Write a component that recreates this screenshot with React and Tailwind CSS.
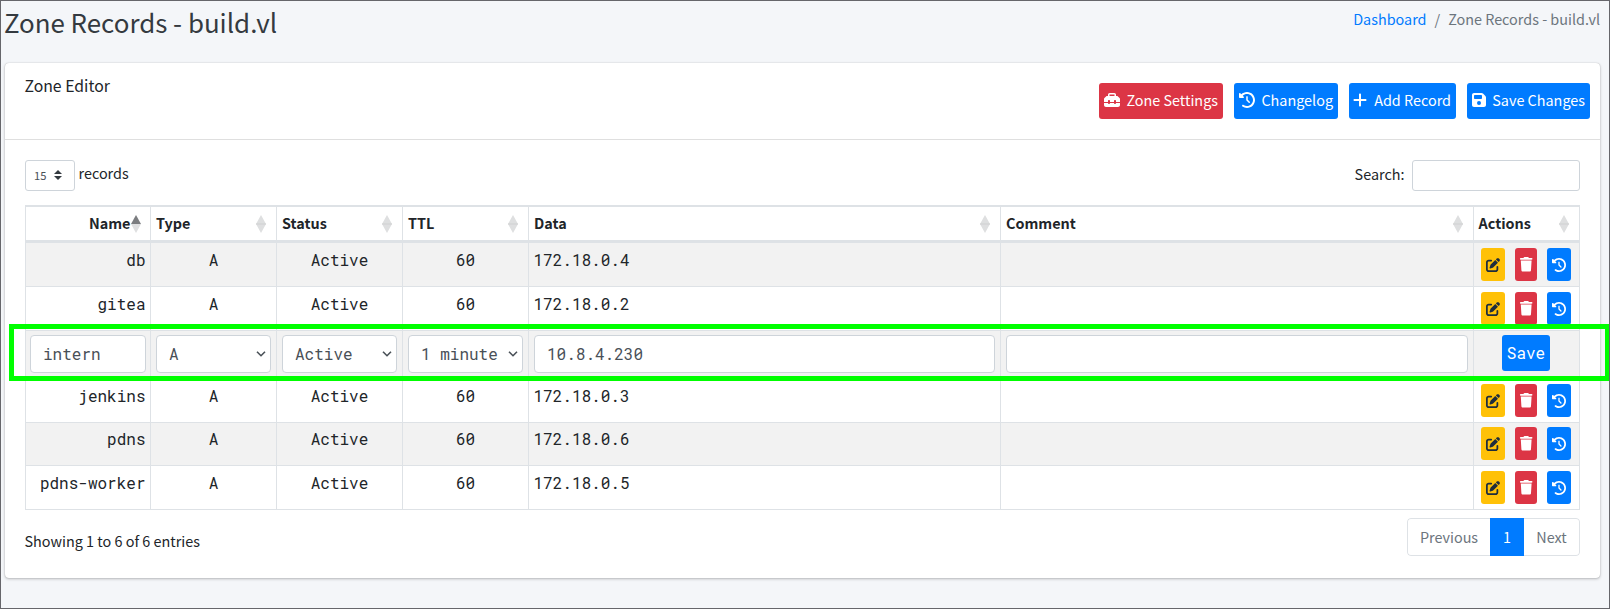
import { FaToolbox, FaClockRotateLeft, FaPlus, FaFloppyDisk, FaPenToSquare, FaTrash } from "react-icons/fa6";

const records = [
  { name: "db", data: "172.18.0.4", height: "h-[44px]", bg: "bg-[#f2f2f2]" },
  { name: "gitea", data: "172.18.0.2", height: "h-[44px]", bg: "bg-white" },
  { name: "intern", data: "10.8.4.230", height: "h-[48px]", bg: "bg-[#f2f2f2]", editing: true },
  { name: "jenkins", data: "172.18.0.3", height: "h-[44px]", bg: "bg-white" },
  { name: "pdns", data: "172.18.0.6", height: "h-[43px]", bg: "bg-[#f2f2f2]", compact: true },
  { name: "pdns-worker", data: "172.18.0.5", height: "h-[44px]", bg: "bg-white" },
];

const columns = ["Name", "Type", "Status", "TTL", "Data", "Comment", "Actions"];

const gridCols = "grid grid-cols-[125px_126px_126px_126px_472px_473px_107px]";
const mono = "font-['Roboto_Mono','DejaVu_Sans_Mono',monospace]";

function SortIcon({ ascending }) {
  return (
    <svg width="10" height="18" viewBox="0 0 10 18" className="shrink-0">
      <path d="M5 0 L10 9 H0 Z" fill={ascending ? "#7b7d80" : "#dedfe0"} />
      <path d="M0 9 H10 L5 18 Z" fill="#dedfe0" />
      {!ascending && <path d="M0 9 H10" stroke="#cfd0d1" strokeWidth="1" />}
    </svg>
  );
}

function ToolButton({ icon: Icon, color, width, iconClass, children }) {
  return (
    <button className={`flex h-9 items-center justify-between rounded-[3px] px-[5px] text-white ${color} ${width}`}>
      <Icon className={`-mt-0.5 h-4 ${iconClass}`} />
      <span className="-mt-0.5">{children}</span>
    </button>
  );
}

function Chevron() {
  return (
    <svg width="10" height="6" viewBox="0 0 10 6" fill="none" stroke="#495057" strokeWidth="1.6">
      <path d="M1 0.7 L5 4.7 L9 0.7" />
    </svg>
  );
}

function Field({ value, select }) {
  return (
    <div className={`flex h-[38px] flex-1 items-center justify-between rounded-[4px] border border-[#ced4da] bg-white pl-3 text-[#495057] ${select ? "pr-1" : ""}`}>
      <span className="whitespace-pre">{value}</span>
      {select && <Chevron />}
    </div>
  );
}

function EditCells({ record }) {
  const cell = "flex border-l border-b border-[#dee2e6] pt-1";
  return (
    <>
      <div className={`${cell} px-1`}><Field value={record.name} /></div>
      <div className={`${cell} px-[5px]`}><Field value="A" select /></div>
      <div className={`${cell} px-[5px]`}><Field value="Active" select /></div>
      <div className={`${cell} px-[5px]`}><Field value="1 minute" select /></div>
      <div className={`${cell} px-[5px]`}><Field value={record.data} /></div>
      <div className={`${cell} px-[5px]`}><Field value="" /></div>
      <div className="flex justify-center border-x border-b border-[#dee2e6] pr-[2px] pt-1">
        <button className="h-9 w-12 rounded-[3px] bg-[#007bff] pl-px text-white">Save</button>
      </div>
    </>
  );
}

function RecordCells({ record }) {
  const cell = `border-l border-b border-[#dee2e6] ${record.compact ? "pt-1" : "pt-[5px]"}`;
  return (
    <>
      <div className={`${cell} pr-[4.5px] text-right`}>{record.name}</div>
      <div className={`${cell} px-[5px] text-center`}>A</div>
      <div className={`${cell} px-[5px] text-center`}>Active</div>
      <div className={`${cell} px-[5px] text-center`}>60</div>
      <div className={`${cell} pl-[4.5px]`}>{record.data}</div>
      <div className={cell} />
      <div className={`flex items-start gap-[10px] border-x border-b border-[#dee2e6] pl-[7px] ${record.compact ? "pt-1" : "pt-[5px]"}`}>
        <button className="flex h-[33px] w-6 items-center justify-center rounded-[3px] bg-[#ffc107] text-[#1f2d3d]"><FaPenToSquare size={14} /></button>
        <button className="flex h-[33px] w-[22px] items-center justify-center rounded-[3px] bg-[#dc3545] text-white"><FaTrash size={14.4} /></button>
        <button className="flex h-[33px] w-6 items-center justify-center rounded-[3px] bg-[#007bff] text-white"><FaClockRotateLeft size={14} /></button>
      </div>
    </>
  );
}

export default function App() {
  return (
    <div className="relative h-[609px] w-[1610px] overflow-hidden border border-[#66666b] bg-[#f4f6f9] pl-1 font-['Source_Sans_Pro','Noto_Sans_CJK_SC',sans-serif] text-[14.4px] leading-6 text-[#212529]">
      <header className="flex h-[62px] justify-between pr-[9px]">
        <h1 className="-ml-px pt-1 text-[25.9px] leading-[34px] text-[#343a40]">Zone Records - build.vl</h1>
        <nav className="flex gap-2 pt-[6px] text-[#6c757d]">
          <a className="text-[#007bff]">Dashboard</a>
          <span>/</span>
          <span>Zone Records - build.vl</span>
        </nav>
      </header>

      <main className="h-[515px] w-[1595px] rounded-[4px] bg-white shadow-[0_0_1px_rgba(0,0,0,.25),0_1px_3px_rgba(0,0,0,.25)]">
        <div className="flex h-[77px] justify-between border-b border-[#dfdfdf] pl-5 pr-[10px]">
          <h3 className="-ml-[0.5px] pt-[11px] text-[15.8px]">Zone Editor</h3>
          <div className="flex gap-[11px] pt-5">
            <ToolButton icon={FaToolbox} color="bg-[#dc3545]" width="w-[124px]" iconClass="w-4">Zone Settings</ToolButton>
            <ToolButton icon={FaClockRotateLeft} color="bg-[#007bff]" width="w-[104px]" iconClass="w-4">Changelog</ToolButton>
            <ToolButton icon={FaPlus} color="bg-[#007bff]" width="w-[107px]" iconClass="w-[14px] -ml-px">Add Record</ToolButton>
            <ToolButton icon={FaFloppyDisk} color="bg-[#007bff]" width="w-[123px]" iconClass="w-[14px]">Save Changes</ToolButton>
          </div>
        </div>

        <div className="px-5 pt-5">
          <div className="flex h-[45px] justify-between">
            <div className="flex items-start gap-[3.5px]">
              <div className="flex h-[31px] w-[50px] items-center gap-[8px] rounded-[3px] border border-[#ced4da] pl-2 text-[11.2px] text-[#495057]">
                <span className="-mt-0.5">15</span>
                <svg width="8" height="10" viewBox="0 0 8 10" fill="#343a40" className="-mt-0.5"><path d="M4 0 L8 4 H0 Z M0 6 H8 L4 10 Z" /></svg>
              </div>
              <span className="pt-px">records</span>
            </div>
            <div className="flex items-start gap-[7.5px]">
              <span className="pt-[2px]">Search:</span>
              <div className="h-[31px] w-[168px] rounded-[3px] border border-[#ced4da]" />
            </div>
          </div>

          <div className={`${gridCols} h-[38px] font-bold`}>
            {columns.map((label, i) => (
              <div
                key={label}
                className={`flex items-center border-l border-b-[3px] border-t-2 border-[#dee2e6] ${i === 0 ? "justify-end pr-[9.5px]" : i === 6 ? "justify-between border-r pl-[4.5px] pr-[10px]" : "justify-between pl-[5px] pr-[10px]"}`}
              >
                <span className="-mt-0.5">{label}</span>
                <SortIcon ascending={i === 0} />
              </div>
            ))}
          </div>
          {records.map((record) => (
            <div key={record.name} className={`${gridCols} ${mono} text-[16px] ${record.height} ${record.bg}`}>
              {record.editing ? <EditCells record={record} /> : <RecordCells record={record} />}
            </div>
          ))}

          <div className="flex justify-between pt-2">
            <span className="-ml-[0.5px] pt-[11px]">Showing 1 to 6 of 6 entries</span>
            <div className="flex h-[38px] w-[173px] overflow-hidden rounded-[4px] text-[#6c757d]">
              <span className="flex w-[83px] items-center justify-center rounded-l-[4px] border border-r-0 border-[#dee2e6]">Previous</span>
              <span className="flex w-[34px] items-center justify-center bg-[#007bff] text-white">1</span>
              <span className="flex w-[56px] items-center justify-center rounded-r-[4px] border border-l-0 border-[#dee2e6]">Next</span>
            </div>
          </div>
        </div>
      </main>

      <div className="absolute left-[8px] top-[323px] h-[57px] w-[1601px] border-[5px] border-[#00ff00]" />
    </div>
  );
}
